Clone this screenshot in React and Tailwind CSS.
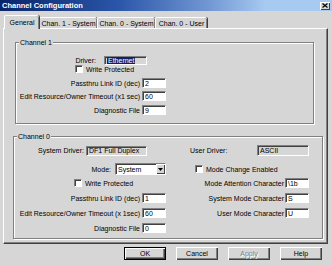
import React from "react";

const SUNK =
  "border border-t-[#808080] border-l-[#808080] border-r-white border-b-white shadow-[inset_1px_1px_0_#404040]";

function Field({ className = "", gray = false, children }) {
  return (
    <div
      className={`flex items-center pl-[2px] leading-none overflow-hidden ${SUNK} ${
        gray ? "bg-[#d6d6d6]" : "bg-white"
      } ${className}`}
    >
      {children}
    </div>
  );
}

function Check() {
  return <div className={`w-[8px] h-[8px] bg-white shrink-0 ${SUNK}`} />;
}

function Group({ label, className = "", children }) {
  return (
    <div
      className={`relative border border-[#808080] shadow-[inset_1px_1px_0_#ffffff,1px_1px_0_#ffffff] ${className}`}
    >
      <span className="absolute -top-[5px] left-[3px] bg-[#d6d6d6] px-[1px] leading-[9px]">
        {label}
      </span>
      {children}
    </div>
  );
}

function Button({ children, def = false, disabled = false }) {
  return (
    <div
      className={`w-[42px] h-[13px] flex items-center justify-center leading-none bg-[#d6d6d6] ${
        def
          ? "border border-black shadow-[inset_1px_1px_0_#ffffff,inset_-1px_-1px_0_#404040,inset_-2px_-2px_0_#808080]"
          : "shadow-[inset_1px_1px_0_#ffffff,inset_-1px_-1px_0_#404040,inset_-2px_-2px_0_#808080]"
      }`}
    >
      <span
        className={
          disabled ? "text-[#808080] [text-shadow:1px_1px_0_#ffffff]" : ""
        }
      >
        {children}
      </span>
    </div>
  );
}

function Tab({ children, selected = false, className = "" }) {
  return (
    <div
      className={`flex items-center justify-center leading-none bg-[#d6d6d6] border-t border-l border-t-white border-l-white rounded-t-[2px] shadow-[inset_-1px_0_0_#808080,1px_0_0_#404040] ${
        selected ? "h-[14px] -mb-[1px] relative z-10" : "h-[11px]"
      } ${className}`}
    >
      {children}
    </div>
  );
}

export default function App() {
  return (
    <div className="w-[332px] h-[266px] bg-[#d6d6d6] overflow-hidden text-[7px] text-black font-['Liberation_Sans',Arial,sans-serif]">
      {/* Title bar */}
      <div className="h-[11px] flex items-center justify-between pl-[2px] pr-[2px] bg-[linear-gradient(90deg,#0a246a_0%,#2a55a8_35%,#6f95d2_62%,#a6caf0_80%)]">
        <span className="text-white font-bold text-[7.5px] leading-none">
          Channel Configuration
        </span>
        <div className="w-[10px] h-[8px] bg-[#d6d6d6] flex items-center justify-center shadow-[inset_1px_1px_0_#ffffff,inset_-1px_-1px_0_#404040]">
          <svg width="6" height="5" viewBox="0 0 6 5">
            <path d="M0.5 0.5 L5.5 4.5 M5.5 0.5 L0.5 4.5" stroke="#000" strokeWidth="1.2" />
          </svg>
        </div>
      </div>

      {/* Tabs */}
      <div className="h-[17px] flex items-end pl-[4px]">
        <Tab selected className="w-[35px]">General</Tab>
        <Tab className="w-[58px]">Chan. 1 - System</Tab>
        <Tab className="w-[58px]">Chan. 0 - System</Tab>
        <Tab className="w-[52px]">Chan. 0 - User</Tab>
      </div>

      {/* Panel */}
      <div className="ml-[3px] w-[325px] h-[216px] border border-t-white border-l-white border-r-[#404040] border-b-[#404040] shadow-[inset_-1px_-1px_0_#808080]">
        {/* Channel 1 */}
        <Group label="Channel 1" className="ml-[11px] mt-[13px] w-[299px] h-[82px]">
          <div className="pt-[13px] flex flex-col">
            <div className="h-[9px] flex items-center">
              <span className="w-[80px] text-right leading-none">Driver:</span>
              <Field gray className="ml-[8px] w-[43px] h-[9px]">
                <span className="bg-[#0a246a] text-white px-[1px] leading-[7px]">Ethernet</span>
              </Field>
            </div>
            <div className="h-[8px] flex items-center pl-[59px]">
              <Check />
              <span className="ml-[3px] leading-none">Write Protected</span>
            </div>
            <div className="mt-[5px] h-[10px] flex items-center">
              <span className="w-[124px] text-right leading-none">Passthru Link ID (dec)</span>
              <Field className="ml-[2px] w-[24px] h-[10px]">2</Field>
            </div>
            <div className="mt-[3px] h-[10px] flex items-center">
              <span className="w-[124px] text-right leading-none">
                Edit Resource/Owner Timeout (x1 sec)
              </span>
              <Field className="ml-[2px] w-[24px] h-[10px]">60</Field>
            </div>
            <div className="mt-[4px] h-[10px] flex items-center">
              <span className="w-[124px] text-right leading-none">Diagnostic File</span>
              <Field className="ml-[2px] w-[24px] h-[10px]">9</Field>
            </div>
          </div>
        </Group>

        {/* Channel 0 */}
        <Group label="Channel 0" className="ml-[9px] mt-[12px] w-[310px] h-[103px]">
          <div className="pt-[8px] flex flex-col">
            <div className="h-[11px] flex items-center">
              <div className="w-[156px] flex items-center">
                <span className="w-[70px] text-right leading-none">System Driver:</span>
                <Field gray className="ml-[2px] w-[61px] h-[10px]">DF1 Full Duplex</Field>
              </div>
              <div className="flex items-center pl-[20px]">
                <span className="w-[67px] leading-none">User Driver:</span>
                <Field gray className="w-[52px] h-[11px]">ASCII</Field>
              </div>
            </div>

            <div className="mt-[7px] h-[12px] flex items-center">
              <div className="w-[156px] flex items-center">
                <span className="w-[97px] text-right leading-none">Mode:</span>
                <div className={`ml-[4px] w-[51px] h-[12px] bg-white flex items-stretch ${SUNK}`}>
                  <span className="flex-1 pl-[2px] flex items-center leading-none">System</span>
                  <div className="w-[9px] bg-[#d6d6d6] flex items-center justify-center shadow-[inset_1px_1px_0_#ffffff,inset_-1px_-1px_0_#404040]">
                    <svg width="5" height="3" viewBox="0 0 5 3">
                      <path d="M0 0 H5 L2.5 3 Z" fill="#000" />
                    </svg>
                  </div>
                </div>
              </div>
              <div className="flex items-center pl-[25px]">
                <Check />
                <span className="ml-[3px] leading-none">Mode Change Enabled</span>
              </div>
            </div>

            <div className="mt-[3px] h-[10px] flex items-center">
              <div className="w-[156px] flex items-center pl-[60px]">
                <Check />
                <span className="ml-[3px] leading-none">Write Protected</span>
              </div>
              <div className="flex items-center">
                <span className="w-[114px] text-right leading-none">Mode Attention Character</span>
                <Field className="ml-[1px] w-[24px] h-[10px]">\1b</Field>
              </div>
            </div>

            <div className="mt-[5px] h-[10px] flex items-center">
              <div className="w-[156px] flex items-center">
                <span className="w-[126px] text-right leading-none">Passthru Link ID (dec)</span>
                <Field className="ml-[2px] w-[24px] h-[10px]">1</Field>
              </div>
              <div className="flex items-center">
                <span className="w-[114px] text-right leading-none">System Mode Character</span>
                <Field className="ml-[1px] w-[24px] h-[10px]">S</Field>
              </div>
            </div>

            <div className="mt-[5px] h-[10px] flex items-center">
              <div className="w-[156px] flex items-center">
                <span className="w-[126px] text-right leading-none">
                  Edit Resource/Owner Timeout (x 1sec)
                </span>
                <Field className="ml-[2px] w-[24px] h-[10px]">60</Field>
              </div>
              <div className="flex items-center">
                <span className="w-[114px] text-right leading-none">User Mode Character</span>
                <Field className="ml-[1px] w-[24px] h-[10px]">U</Field>
              </div>
            </div>

            <div className="mt-[5px] h-[10px] flex items-center">
              <div className="w-[156px] flex items-center">
                <span className="w-[126px] text-right leading-none">Diagnostic File</span>
                <Field className="ml-[2px] w-[24px] h-[10px]">0</Field>
              </div>
            </div>
          </div>
        </Group>
      </div>

      {/* Buttons */}
      <div className="mt-[3px] pl-[124px] flex gap-[10px]">
        <Button def>OK</Button>
        <Button>Cancel</Button>
        <Button disabled>Apply</Button>
        <Button>Help</Button>
      </div>
    </div>
  );
}
